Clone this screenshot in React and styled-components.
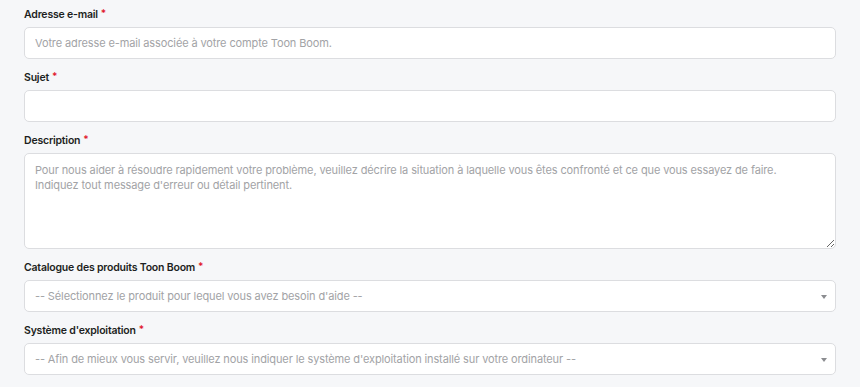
import React from "react";
import styled, { createGlobalStyle } from "styled-components";

const Global = createGlobalStyle`
  html, body { margin: 0; padding: 0; background: #f6f7f9; }
  body { font-family: Inter, "Noto Sans", sans-serif; }
  * { box-sizing: border-box; }
`;

const Form = styled.form`
  display: flex;
  flex-direction: column;
  gap: 11px;
  padding: 7px 24px 0 24px;
`;

const Field = styled.div`
  display: flex;
  flex-direction: column;
  gap: 4px;
`;

const Label = styled.label`
  display: flex;
  align-items: flex-start;
  height: 16px;
  font-family: Inter, sans-serif;
  font-size: 10.5px;
  font-weight: 600;
  letter-spacing: -0.2px;
  line-height: 16px;
  color: #1d1f22;
`;

const Req = styled.span`
  color: #e1192f;
  font-size: 10px;
  line-height: 13px;
  margin-left: 3px;
`;

const inputBase = `
  width: 100%;
  background: #fff;
  border: 1px solid #dcdde0;
  border-radius: 5px;
  font-family: Inter, sans-serif;
  font-size: 11px;
  letter-spacing: -0.12px;
  color: #333;
  padding: 0 10px;
  outline: none;
  &::placeholder { color: #a2a3a6; }
`;

const Input = styled.input`
  ${inputBase}
  height: 32px;
`;

const TextArea = styled.textarea`
  ${inputBase}
  height: 96px;
  padding: 9px 10px;
  line-height: 15px;
  resize: vertical;
  display: block;
`;

const SelectBox = styled.div`
  ${inputBase}
  height: 32px;
  display: flex;
  align-items: center;
  justify-content: space-between;
  color: #a2a3a6;
  padding-right: 8px;
`;

const Arrow = styled.span`
  width: 0;
  height: 0;
  border-left: 3.5px solid transparent;
  border-right: 3.5px solid transparent;
  border-top: 4px solid #8b8c90;
  margin-top: 2px;
`;

function Select({ placeholder }) {
  return (
    <SelectBox>
      <span>{placeholder}</span>
      <Arrow />
    </SelectBox>
  );
}

export default function App() {
  return (
    <>
      <Global />
      <Form>
        <Field>
          <Label>
            Adresse e-mail<Req>*</Req>
          </Label>
          <Input placeholder="Votre adresse e-mail associée à votre compte Toon Boom." />
        </Field>
        <Field>
          <Label>
            Sujet<Req>*</Req>
          </Label>
          <Input />
        </Field>
        <Field>
          <Label>
            Description<Req>*</Req>
          </Label>
          <TextArea
            placeholder={
              "Pour nous aider à résoudre rapidement votre problème, veuillez décrire la situation à laquelle vous êtes confronté et ce que vous essayez de faire.\nIndiquez tout message d'erreur ou détail pertinent."
            }
          />
        </Field>
        <Field>
          <Label>
            Catalogue des produits Toon Boom<Req>*</Req>
          </Label>
          <Select placeholder="-- Sélectionnez le produit pour lequel vous avez besoin d'aide --" />
        </Field>
        <Field>
          <Label>
            Système d'exploitation<Req>*</Req>
          </Label>
          <Select placeholder="-- Afin de mieux vous servir, veuillez nous indiquer le système d'exploitation installé sur votre ordinateur --" />
        </Field>
      </Form>
    </>
  );
}
